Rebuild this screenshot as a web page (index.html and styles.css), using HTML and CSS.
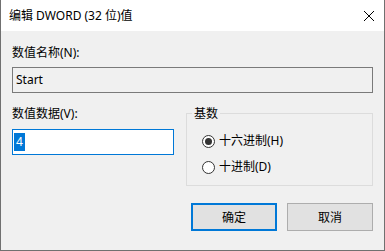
FILE: index.html
```html
<!DOCTYPE html>
<html>
<head>
    <title>编辑 DWORD (32 位)值</title>
    <link rel="stylesheet" href="styles.css">
</head>
<body>
    <div class="window">
        <div class="titlebar">
            <span class="title">编辑 DWORD (32 位)值</span>
            <svg class="close" width="10" height="10" viewBox="0 0 10 10">
                <path d="M0 0 L10 10 M10 0 L0 10" stroke="#000" stroke-width="1" fill="none"/>
            </svg>
        </div>

        <div class="client">
            <div class="label first">数值名称(N):</div>
            <div class="field readonly">Start</div>

            <div class="row">
                <div class="data-col">
                    <div class="label">数值数据(V):</div>
                    <div class="field active"><span class="sel">4</span></div>
                </div>

                <fieldset class="base">
                    <legend>基数</legend>
                    <label class="radio first-radio"><span class="dot checked"></span>十六进制(H)</label>
                    <label class="radio"><span class="dot"></span>十进制(D)</label>
                </fieldset>
            </div>

            <div class="buttons">
                <button class="btn default">确定</button>
                <button class="btn">取消</button>
            </div>
        </div>
    </div>
</body>
</html>
```

FILE: styles.css
```css
body {
    margin: 0;
    font-family: "Noto Sans", "Noto Sans CJK SC", sans-serif;
    font-size: 12px;
    color: #000;
}
.window {
    width: 385px;
    height: 251px;
    box-sizing: border-box;
    border: 1px solid #707070;
    border-top: none;
    background: #f0f0f0;
    display: flex;
    flex-direction: column;
}
.titlebar {
    height: 31px;
    background: #fff;
    display: flex;
    align-items: center;
    justify-content: space-between;
    padding-left: 8px;
    line-height: 16px;
}
.close {
    margin-right: 10px;
}
.client {
    padding: 0 11px;
}
.label {
    line-height: 16px;
    margin-top: 13px;
}
.label.first {
    margin-top: 14px;
}
.field {
    height: 26px;
    box-sizing: border-box;
    display: flex;
    align-items: center;
    line-height: 16px;
}
.readonly {
    margin-top: 6px;
    border: 1px solid #7a7a7a;
    background: #f0f0f0;
    padding-left: 3px;
}
.active {
    margin-top: 7px;
    border: 1px solid #0078d7;
    background: #fff;
    padding-left: 1px;
}
.sel {
    display: inline-block;
    background: #0078d7;
    color: #fff;
    line-height: 18px;
    padding: 0 2px;
}
.row {
    display: flex;
    gap: 12px;
}
.data-col {
    width: 162px;
}
.base {
    margin: 12px 0 0 0;
    padding: 0 0 10px 0;
    width: 187px;
    box-sizing: border-box;
    border: 1px solid #dcdcdc;
    border-radius: 0;
    display: flex;
    flex-direction: column;
    min-inline-size: 0;
}
.base legend {
    margin-left: 5px;
    padding: 2px 2px 0 2px;
    line-height: 14px;
}
.radio {
    display: flex;
    align-items: center;
    gap: 4px;
    line-height: 16px;
    margin: 10px 0 0 15px;
}
.first-radio {
    margin-top: 12px;
}
.dot {
    width: 13px;
    height: 13px;
    box-sizing: border-box;
    border: 1px solid #333;
    border-radius: 50%;
    background: #fff;
    display: flex;
    align-items: center;
    justify-content: center;
}
.dot.checked::after {
    content: "";
    width: 7px;
    height: 7px;
    border-radius: 50%;
    background: #333;
}
.buttons {
    display: flex;
    justify-content: flex-end;
    gap: 10px;
    margin-top: 17px;
}
.btn {
    width: 86px;
    height: 28px;
    box-sizing: border-box;
    background: #e1e1e1;
    border: 1px solid #adadad;
    font-family: inherit;
    font-size: 12px;
    color: #000;
    padding: 0;
}
.btn.default {
    border: 2px solid #0078d7;
}
```
